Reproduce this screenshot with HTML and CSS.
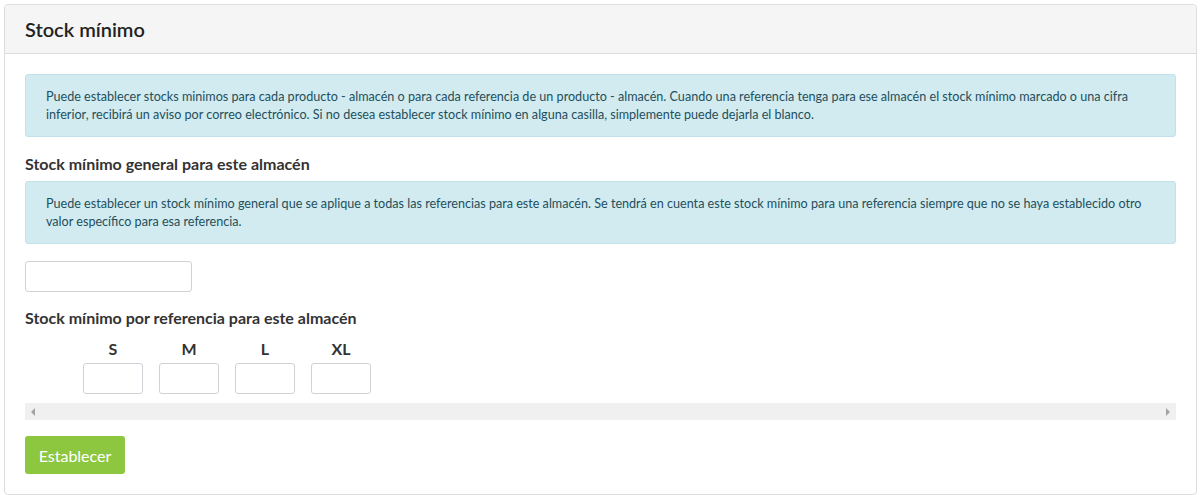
FILE: index.html
```html
<!DOCTYPE html>
<html lang="es">
<head>
  <meta charset="UTF-8" />
  <meta name="viewport" content="width=device-width, initial-scale=1.0"/>
  <title>Stock mínimo</title>
  <link rel="stylesheet" href="styles.css">
</head>
<body>

<div class="panel">
  <div class="panel-heading">Stock mínimo</div>

  <div class="panel-body">
    <div class="alert">
      Puede establecer stocks minimos para cada producto - almacén o para cada referencia de un producto - almacén. Cuando una referencia tenga para ese almacén el stock mínimo marcado o una cifra inferior, recibirá un aviso por correo electrónico. Si no desea establecer stock mínimo en alguna casilla, simplemente puede dejarla el blanco.
    </div>

    <h4>Stock mínimo general para este almacén</h4>
    <div class="alert">
      Puede establecer un stock mínimo general que se aplique a todas las referencias para este almacén. Se tendrá en cuenta este stock mínimo para una referencia siempre que no se haya establecido otro valor específico para esa referencia.
    </div>

    <input type="text" class="input-general">

    <h4 class="h-ref">Stock mínimo por referencia para este almacén</h4>

    <div class="sizes">
      <div class="size-row">
        <div class="spacer"></div>
        <div class="size">S</div>
        <div class="size">M</div>
        <div class="size">L</div>
        <div class="size">XL</div>
      </div>
      <div class="size-row">
        <div class="spacer"></div>
        <input type="text" class="input-size">
        <input type="text" class="input-size">
        <input type="text" class="input-size">
        <input type="text" class="input-size">
      </div>
    </div>

    <div class="hscroll">
      <span class="arrow-left"></span>
      <span class="arrow-right"></span>
    </div>

    <button class="btn">Establecer</button>
  </div>
</div>

</body>
</html>
```

FILE: styles.css
```css
body {
  margin: 0;
  padding: 4px;
  background: #ffffff;
  font-family: Lato, 'Open Sans', sans-serif;
  color: #333;
}

.panel {
  border: 1px solid #dddddd;
  border-radius: 4px;
  background: #fff;
}

.panel-heading {
  background: #f5f5f5;
  border-bottom: 1px solid #dddddd;
  border-radius: 4px 4px 0 0;
  height: 48px;
  line-height: 49px;
  padding: 0 20px;
  font-size: 20px;
  font-weight: 600;
  color: #222;
}

.panel-body {
  padding: 20px 20px 20px;
}

.alert {
  background: #d1ebf0;
  border: 1px solid #bfe3ea;
  border-radius: 3px;
  color: #1f4f5c;
  font-size: 12.6px;
  line-height: 18px;
  padding: 13px 20px 12px;
}

h4 {
  margin: 17px 0 7px;
  font-size: 16px;
  line-height: 20px;
  font-weight: bold;
  color: #333;
}

.h-ref {
  margin: 16px 0 12px;
}

input {
  box-sizing: border-box;
  border: 1px solid #cfd3d8;
  border-radius: 3px;
  background: #fff;
  height: 31px;
  margin: 0;
}

.input-general {
  display: block;
  width: 167px;
  margin-top: 17px;
}

.size-row {
  display: flex;
  gap: 16px;
}

.spacer {
  width: 42px;
}

.size {
  width: 60px;
  text-align: center;
  font-size: 16px;
  font-weight: bold;
  line-height: 18px;
  margin-bottom: 5px;
}

.input-size {
  width: 60px;
}

.hscroll {
  margin-top: 9px;
  height: 17px;
  background: #f0f0f0;
  display: flex;
  justify-content: space-between;
  align-items: center;
  padding: 0 6px;
}

.arrow-left {
  border-top: 4px solid transparent;
  border-bottom: 4px solid transparent;
  border-right: 4px solid #a3a3a3;
}

.arrow-right {
  border-top: 4px solid transparent;
  border-bottom: 4px solid transparent;
  border-left: 4px solid #a3a3a3;
}

.btn {
  margin-top: 16px;
  display: block;
  width: 100px;
  height: 38px;
  border: none;
  border-radius: 3px;
  background: #8dc63f;
  color: #fff;
  font-family: Lato, sans-serif;
  font-size: 16px;
  cursor: pointer;
}
```
